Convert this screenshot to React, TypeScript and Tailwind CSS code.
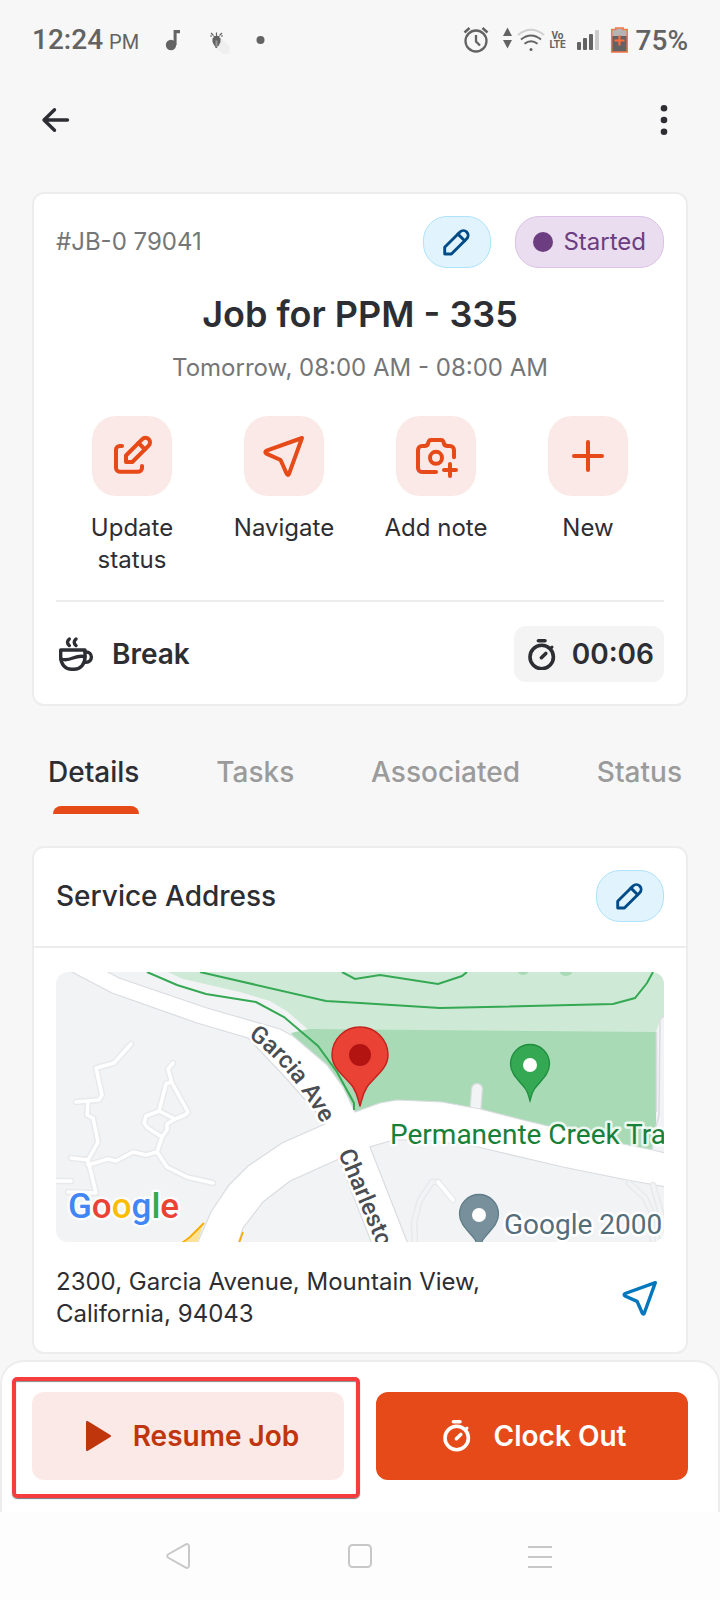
import React from "react";

type IconProps = { className?: string };

function PencilIcon() {
  return (
    <svg aria-hidden="true" viewBox="0 0 32 32" className="size-8 overflow-visible" fill="none" stroke="#024b88" strokeWidth="2.9" strokeLinejoin="round" strokeLinecap="round">
      <path d="M3.7 21.3 19 6a4.7 4.7 0 0 1 6.7 6.7L10.4 28H3.7z" />
      <path d="m17 8.1 6.7 6.6" />
    </svg>
  );
}

function EditSquareIcon() {
  return (
    <svg aria-hidden="true" viewBox="0 0 40 40" className="size-10 overflow-visible" fill="none" stroke="currentColor" strokeWidth="4" strokeLinejoin="round" strokeLinecap="round">
      <path d="M10 10H7.7A3.7 3.7 0 0 0 4 13.7V32a3.7 3.7 0 0 0 3.7 3.7h18.6A3.7 3.7 0 0 0 30 32v-2" />
      <path d="M14 19.5 30.3 3.2a4.5 4.5 0 0 1 6.4 6.4L20.3 26H14z" />
      <path d="m26.5 7 6.4 6.4" />
    </svg>
  );
}

function SendIcon({ className }: IconProps) {
  return (
    <svg aria-hidden="true" viewBox="0 0 40 40" className={className} fill="none" stroke="currentColor" strokeWidth="4" strokeLinejoin="round">
      <path d="M38 2 2.6 14.7c-1.6.6-1.7 2.2-.2 2.9L16.6 24l6.2 14c.6 1.3 1.8 1.3 2.2-.1z" />
    </svg>
  );
}

function CameraPlusIcon() {
  return (
    <svg aria-hidden="true" viewBox="0 0 40 40" className="size-10 overflow-visible" fill="none" stroke="currentColor" strokeWidth="4" strokeLinejoin="round" strokeLinecap="round">
      <path d="M20 36H6a4 4 0 0 1-4-4V14a4 4 0 0 1 4-4h2.5c2 0 3.3-1 3.7-3l.3-1c.4-1.3 1.3-2 2.5-2h10c1.2 0 2.1.7 2.5 2l.3 1c.4 2 1.7 3 3.7 3H34a4 4 0 0 1 4 4v7.3" />
      <circle cx="20" cy="21.8" r="6" />
      <path d="M28 34h12M34 28v12" />
    </svg>
  );
}

function PlusIcon() {
  return (
    <svg aria-hidden="true" viewBox="0 0 40 40" className="size-10" fill="none" stroke="currentColor" strokeWidth="4" strokeLinecap="round">
      <path d="M20 6v28M6 20h28" />
    </svg>
  );
}

function CoffeeIcon() {
  return (
    <svg aria-hidden="true" viewBox="0 0 36 36" className="size-9" fill="none" stroke="currentColor" strokeWidth="3.400" strokeLinejoin="round" strokeLinecap="round">
      <path d="M2.7 14H27v7c0 7-4.500 12.300-11 12.300h-2.300c-6.500 0-11-5.300-11-12.300z" />
      <path d="M27 16h1.300a5.100 5.100 0 0 1 0 10.200H26.400" />
      <path d="M3 23c4 1.400 8 .6 12-1s8-2.500 12-1.300" />
      <path d="M11.300 3q-3.600 3.300 0 6.500M18 3q-3.600 3.300 0 6.500" />
    </svg>
  );
}

function StopwatchIcon({ className, viewBox }: IconProps & { viewBox: string }) {
  return (
    <svg aria-hidden="true" viewBox={viewBox} className={className} fill="none" stroke="currentColor" strokeWidth="3.600" strokeLinecap="round">
      <circle cx="15.700" cy="19" r="11.700" />
      <path d="M12.400 2.800h6.600" />
      <path d="m15.400 19.700 4.400-4.200" />
      <path d="m25 10 1-.800" strokeWidth="3" />
    </svg>
  );
}

function StatusBar() {
  return (
    <header className="flex h-20 items-center justify-between px-8 font-[Roboto,sans-serif] font-medium text-[#636363]">
      <div className="flex items-center">
        <p className="flex items-baseline gap-1.5 whitespace-nowrap pt-0.5 text-[28px] leading-8">
          12:24 <span className="text-xl leading-8 font-normal">PM</span>
        </p>
        <svg aria-hidden="true" viewBox="0 0 110 32" className="ml-4 h-8 w-[110px]" fill="currentColor">
          <circle cx="16" cy="21" r="5.200" />
          <path d="M18.600 6H25v3.200h-3.400V21h-3z" />
          <path d="m65.500 13 9 9v8h-6l-8-6z" fill="#efefef" />
          <path d="M58.500 12h6v2h1v4l-2 4h-1l-.500 2h-1.500l-.500-2h-.500l-2-4v-4h1z" />
          <path d="m56 9 2.500 2.500M67 9l-2.500 2.500M55 12h2M68 12h-2M61.500 8.500V12" stroke="currentColor" strokeWidth="1.200" />
          <path d="M60.500 16.500h2v6h-2z" fill="#999" />
          <circle cx="105.500" cy="16" r="4" />
        </svg>
      </div>
      <div className="flex items-center">
        <svg aria-hidden="true" viewBox="0 0 90 32" className="h-8 w-[90px]" fill="none" stroke="currentColor">
          <circle cx="18" cy="17" r="10.500" strokeWidth="2.300" />
          <path d="M18 11v6.500l4 4" strokeWidth="2.300" />
          <path d="m6.500 8.500 5-4.500M29.500 8.500l-5-4.500" strokeWidth="2.500" />
          <path d="m49.500 3.500 4.500 8.500h-9zM49.500 24.500 45 16h9z" fill="currentColor" stroke="none" />
          <path d="M60 11q13-10.500 26 0" stroke="#d0d0d0" strokeWidth="2" />
          <path d="M63 15.500q10-8 20 0M66.500 19.800q6.500-5 13 0" strokeWidth="2" />
          <circle cx="73" cy="25.500" r="1.500" fill="currentColor" stroke="none" />
        </svg>
        <p className="flex w-5 flex-col items-center text-[10px] leading-[9px] font-bold">
          <span>Vo</span>
          <span>LTE</span>
        </p>
        <svg aria-hidden="true" viewBox="2 0 60 32" className="ml-1 h-8 w-[60px]" fill="currentColor">
          <rect x="7" y="18" width="4" height="8" rx="1" />
          <rect x="13" y="14" width="4" height="12" rx="1" />
          <rect x="19" y="10" width="4" height="16" rx="1" />
          <rect x="25" y="6" width="4" height="20" rx="1" fill="#cbcbcb" />
          <path d="M41.700 5.500h4V4h7.500v1.500h4V28H41.700z" fill="#b4b4b4" />
          <path d="M42 12h15v16H42z" />
          <path d="M41.700 5.500h4V4h7.500v1.500h4V28H41.700z" fill="none" stroke="#f8744a" strokeWidth="1.500" />
          <path d="M49.500 11.500v10M44.500 16.500h10" stroke="#ff6c3f" strokeWidth="2.200" />
        </svg>
        <p className="ml-1 pt-0.5 text-[28px] leading-8">75%</p>
      </div>
    </header>
  );
}

function EditPill({ label }: { label: string }) {
  return (
    <button type="button" aria-label={label} className="flex h-[52px] w-[68px] items-center justify-center rounded-3xl border border-[#aee3fb] bg-[#e1f4fd]">
      <PencilIcon />
    </button>
  );
}

const actions = [
  { label: "Update status", icon: <EditSquareIcon /> },
  { label: "Navigate", icon: <SendIcon className="size-10 overflow-visible" /> },
  { label: "Add note", icon: <CameraPlusIcon /> },
  { label: "New", icon: <PlusIcon /> },
];

function JobCard() {
  return (
    <section className="rounded-xl border-2 border-[#ededed] bg-white p-[22px]">
      <div className="flex items-center">
        <p className="flex-1 text-2xl text-[#757677]">#JB-0 79041</p>
        <EditPill label="Edit job" />
        <p className="ml-6 flex h-[52px] items-center gap-2.5 rounded-3xl border border-[#dbc2e6] bg-[#eaddef] px-[17px] text-2xl text-[#6c3d80]">
          <span className="size-5 rounded-full bg-[#6c3d80]" />
          Started
        </p>
      </div>
      <h1 className="mt-6 text-center text-4xl leading-[44px] font-semibold">Job for PPM - 335</h1>
      <p className="mt-4 text-center text-2xl leading-8 text-[#757677]">Tomorrow, 08:00 AM - 08:00 AM</p>
      <div className="mt-8 grid grid-cols-4">
        {actions.map((action) => (
          <button key={action.label} type="button" className="flex flex-col items-center gap-4 px-4 text-2xl leading-8">
            <span className="flex size-20 items-center justify-center rounded-3xl bg-[#fbe9e7] text-[#e64a19]">{action.icon}</span>
            {action.label}
          </button>
        ))}
      </div>
      <div className="mt-6 flex items-center border-t-2 border-[#ededed] pt-6">
        <div className="flex flex-1 items-center gap-4.5 pl-0.5 text-[28px] leading-9 font-semibold">
          <CoffeeIcon />
          Break
        </div>
        <p className="flex h-14 items-center gap-3.5 rounded-xl bg-[#f4f4f4] pr-2.5 pl-3 text-[28px] leading-9 font-semibold">
          <StopwatchIcon viewBox="0 0 32 32" className="size-8" />
          00:06
        </p>
      </div>
    </section>
  );
}

const tabs = ["Details", "Tasks", "Associated", "Status"];

function Tabs() {
  return (
    <div role="tablist" className="flex h-[108px] justify-between overflow-hidden pr-1.5 pl-4 text-[28px] leading-10 font-medium">
      {tabs.map((tab, i) => (
        <button
          key={tab}
          type="button"
          role="tab"
          aria-selected={i === 0}
          className={i === 0 ? "flex flex-col pt-[46px]" : "flex flex-col pt-[46px] text-[#9b9b9b]"}
        >
          {tab}
          {i === 0 && <span className="mt-3.5 h-2 w-[86px] self-end rounded-t-lg bg-[#e64a19]" />}
        </button>
      ))}
    </div>
  );
}

const paths = [
  "M75 72 58 91 40 96l6 27-3 5-23 2",
  "M32 130l-1 13 6 3 5 24-10 18 8 33-28-1",
  "M15 186l17 2v5l20-6 8 2 17-9 13 3 11-3 10 15 20 10 26 6",
  "M101 180l5-15 5-7v-6l8-5-16-8 7-27 5-2",
  "M117 91l-5 6 4 14 16 29-3 3-10 4",
  "M103 139l-13 5-2 7 4 5 14 9",
  "M0 209h15",
];

const pin = "M0 37c-1-3-1-7-4.500-12-5-7.500-15-14-15-25a19.500 19.500 0 0 1 39 0c0 11-10 17.500-15 25C1 30 1 34 0 37z";

function StreetMap() {
  return (
    <svg role="img" aria-label="Map of 2300, Garcia Avenue" viewBox="0 0 608 270" preserveAspectRatio="xMidYMid slice" className="block w-full rounded-xl font-[Roboto,sans-serif]">
      <rect width="608" height="270" fill="#f1f3f5" />
      {paths.map((d) => (
        <path key={d} d={d} fill="none" stroke="#e8e9ea" strokeWidth="6.500" strokeLinecap="round" strokeLinejoin="round" />
      ))}
      {paths.map((d) => (
        <path key={d} d={d} fill="none" stroke="#fff" strokeWidth="3.600" strokeLinecap="round" strokeLinejoin="round" />
      ))}
      <path d="M112 0l15 7 57 13 30 9 18 11 24 21h348V48l4-4V0z" fill="#ceead6" />
      <path d="M235 61l18-4 347 3v98l-4 22-30-6-96-22-46-10H299z" fill="#a8dbb5" />
      <path d="M600 60v95l-3 23h11V44l-4 4z" fill="#f1f3f5" />
      <path d="M608 44l-4 3-1 96-3 12-4 24M600.500 60v80" fill="none" stroke="#dadce0" strokeWidth="1.500" />
      <ellipse cx="467" cy="0" rx="5" ry="3" fill="#a8dbb5" />
      <ellipse cx="510" cy="0" rx="6" ry="4" fill="#a8dbb5" />
      <path d="M421 117l-2 26" stroke="#dadce0" strokeWidth="12" strokeLinecap="round" />
      <path d="M421 117l-2 26" stroke="#f1f3f5" strokeWidth="9.500" strokeLinecap="round" />
      <path
        d="M14-1 56 21 141 51 192 66 229 105 267 148 269 152 226 171 192 194 173 213 155 240 141 272H182L187 256 207 230 234 209 283 187 316 272H352L314 175 337 168 371 168 422 175 507 195 571 208 610 215V181L597 178 567 172 471 149 424 137 386 130 341 128 324 131 299 140 287 115 271 93 237 64 224 57 151 36 63 6 50-1z"
        fill="#fff"
        stroke="#dadce0"
        strokeWidth="1.200"
      />
      <path d="M126 271l8-6 14-14-7 20z" fill="#fde293" />
      <path d="M126 271l8-6 14-14M187 260l-4 11" fill="none" stroke="#f9ab00" strokeWidth="1.800" />
      <g fill="none" strokeLinecap="round" strokeLinejoin="round">
        <path d="M359 274l-1-24 6-22 12-18h6M573 211l16 15 7 15 1 33M597 213l9 32v29" stroke="#e6e8ea" strokeWidth="6.500" />
        <path d="M359 274l-1-24 6-22 12-18h6M573 211l16 15 7 15 1 33M597 213l9 32v29" stroke="#f1f3f5" strokeWidth="4" />
        <path d="M382 210l15 18" stroke="#e6e8ea" strokeWidth="6" />
        <path d="M382 210l15 18" stroke="#fff" strokeWidth="4" />
      </g>
      <g fill="none" stroke="#34a853" strokeWidth="2">
        <path d="M91 0l30 13 29 9 50 8 28 15 34 29 19 26 17 31v7" />
        <path d="M144 0l126 29 34 2 80 5 173-4 22-6 12-15 6-11" />
        <path d="M286 0l13 7 25-4 58 9 24-8 5-4" />
      </g>
      <g transform="translate(474 92)">
        <path d={pin} fill="#34a853" stroke="#1e8e3e" strokeWidth="1.300" />
        <circle cy="1" r="7" fill="#fff" />
      </g>
      <g transform="translate(423 242)">
        <path d={pin} fill="#78909c" stroke="#5f7c88" strokeWidth="1.300" />
        <circle cy="1" r="7" fill="#fff" />
      </g>
      <path id="garcia" d="M192 65Q234 94 266 152" fill="none" />
      <path id="charleston" d="M282 181 324 280" fill="none" />
      <g stroke="#fff" strokeWidth="5" strokeLinejoin="round" paintOrder="stroke">
        <text fill="#4a4e53" fontSize="24" fontWeight="500">
          <textPath href="#garcia">Garcia Ave</textPath>
        </text>
        <text fill="#4a4e53" fontSize="24" fontWeight="500">
          <textPath href="#charleston">Charlesto</textPath>
        </text>
        <text x="334" y="172" fill="#188038" fontSize="28" strokeOpacity="0.800">Permanente Creek Tra</text>
        <text x="448" y="262" fill="#546e7a" fontSize="28">Google 2000</text>
        <text x="12" y="246" fontSize="35" fontWeight="500" strokeOpacity="0.800">
          <tspan fill="#4285f4">G</tspan>
          <tspan fill="#ea4335">o</tspan>
          <tspan fill="#fbbc04">o</tspan>
          <tspan fill="#4285f4">g</tspan>
          <tspan fill="#34a853">l</tspan>
          <tspan fill="#ea4335">e</tspan>
        </text>
      </g>
      <path d="M304 134c-2-6-2-11-7-19-7-10-21-18-21-32a28 28 0 0 1 56 0c0 14-14 22-21 32-5 8-5 13-7 19z" fill="#ea4335" stroke="#c5221f" strokeWidth="1.500" strokeLinejoin="round" />
      <circle cx="304" cy="83" r="11" fill="#b31412" />
    </svg>
  );
}

function AddressCard() {
  return (
    <section className="rounded-xl border-2 border-[#ededed] bg-white">
      <div className="flex items-center justify-between border-b-2 border-[#ededed] px-[22px] pt-[22px] pb-6">
        <h2 className="text-[28px] leading-9 font-medium">Service Address</h2>
        <EditPill label="Edit service address" />
      </div>
      <div className="px-[22px] pt-6 pb-[22px]">
        <StreetMap />
        <div className="mt-6 flex items-center justify-between gap-6 pr-[7px]">
          <address className="max-w-[480px] text-2xl leading-8 not-italic">2300, Garcia Avenue, Mountain View, California, 94043</address>
          <a href="#directions" aria-label="Directions" className="text-[#0277bd]">
            <SendIcon className="size-[34px] overflow-visible" />
          </a>
        </div>
      </div>
    </section>
  );
}

function BottomBar() {
  return (
    <div className="mt-1.5 grid grid-cols-2 gap-8 rounded-t-3xl border-2 border-b-0 border-[#ededed] bg-white px-[30px] pt-[30px] pb-8 text-[28px] leading-9 font-semibold">
      <div className="relative">
        <button type="button" className="flex h-[88px] w-full items-center justify-center gap-4 rounded-xl bg-[#fbe9e7] text-[#bf360c]">
          <svg aria-hidden="true" viewBox="0 0 40 40" className="size-10" fill="currentColor">
            <path d="M9 6.200c0-1.200 1-1.600 2-1L33.400 19c.900.600.900 1.400 0 2L11 34.800c-1 .6-2 .2-2-1z" />
          </svg>
          Resume Job
        </button>
        <span className="pointer-events-none absolute -top-[15px] -right-4 -bottom-[18px] -left-5 rounded-[5px] border-4 border-[#f53d3d] shadow-[0_1px_1px_#777,inset_0_1px_1px_#888]" />
      </div>
      <button type="button" className="flex h-[88px] items-center justify-center gap-4 rounded-xl bg-[#e64a19] text-white">
        <StopwatchIcon viewBox="-3 -3 40 40" className="size-10" />
        Clock Out
      </button>
    </div>
  );
}

function SystemNav() {
  return (
    <nav aria-label="System" className="grid h-[88px] grid-cols-3 items-center bg-[#fdfdfd] px-[90px] text-[#c8c8c8]">
      <button type="button" aria-label="Back" className="flex justify-center">
        <svg viewBox="1 0 32 32" className="size-8" fill="none" stroke="currentColor" strokeWidth="2">
          <path d="M22.400 4.600c2-1.100 3.600-.3 3.600 1.800v19.200c0 2.100-1.600 2.900-3.600 1.800L5.700 18c-2-1.200-2-2.800 0-4z" />
        </svg>
      </button>
      <button type="button" aria-label="Home" className="flex justify-center">
        <svg viewBox="0 0 32 32" className="size-8" fill="none" stroke="currentColor" strokeWidth="2">
          <rect x="5" y="5" width="22" height="22" rx="3.500" />
        </svg>
      </button>
      <button type="button" aria-label="Recent apps" className="flex justify-center">
        <svg viewBox="0 0 32 32" className="size-8" fill="none" stroke="currentColor" strokeWidth="2">
          <path d="M4 7h24M4 17h24M4 27h24" />
        </svg>
      </button>
    </nav>
  );
}

export default function App() {
  return (
    <div className="flex min-h-screen flex-col bg-[#f7f7f7] font-[Inter,sans-serif] text-[#2d2e33]">
      <StatusBar />
      <div className="flex h-20 items-center justify-between px-8">
        <button type="button" aria-label="Go back" className="flex size-12 items-center justify-center">
          <svg viewBox="0 0 32 32" className="size-8" fill="none" stroke="currentColor" strokeWidth="3.400" strokeLinecap="round" strokeLinejoin="round">
            <path d="M27.500 16H4M14.500 5.700 4 16l10.500 10.300" />
          </svg>
        </button>
        <button type="button" aria-label="More options" className="flex size-12 items-center justify-center">
          <svg viewBox="0 0 32 32" className="size-8" fill="currentColor">
            <circle cx="16" cy="4.300" r="3.300" />
            <circle cx="16" cy="16" r="3.300" />
            <circle cx="16" cy="27.700" r="3.300" />
          </svg>
        </button>
      </div>
      <main className="flex-1 px-8 pt-8">
        <JobCard />
        <Tabs />
        <div className="mt-8">
          <AddressCard />
        </div>
      </main>
      <BottomBar />
      <SystemNav />
    </div>
  );
}
